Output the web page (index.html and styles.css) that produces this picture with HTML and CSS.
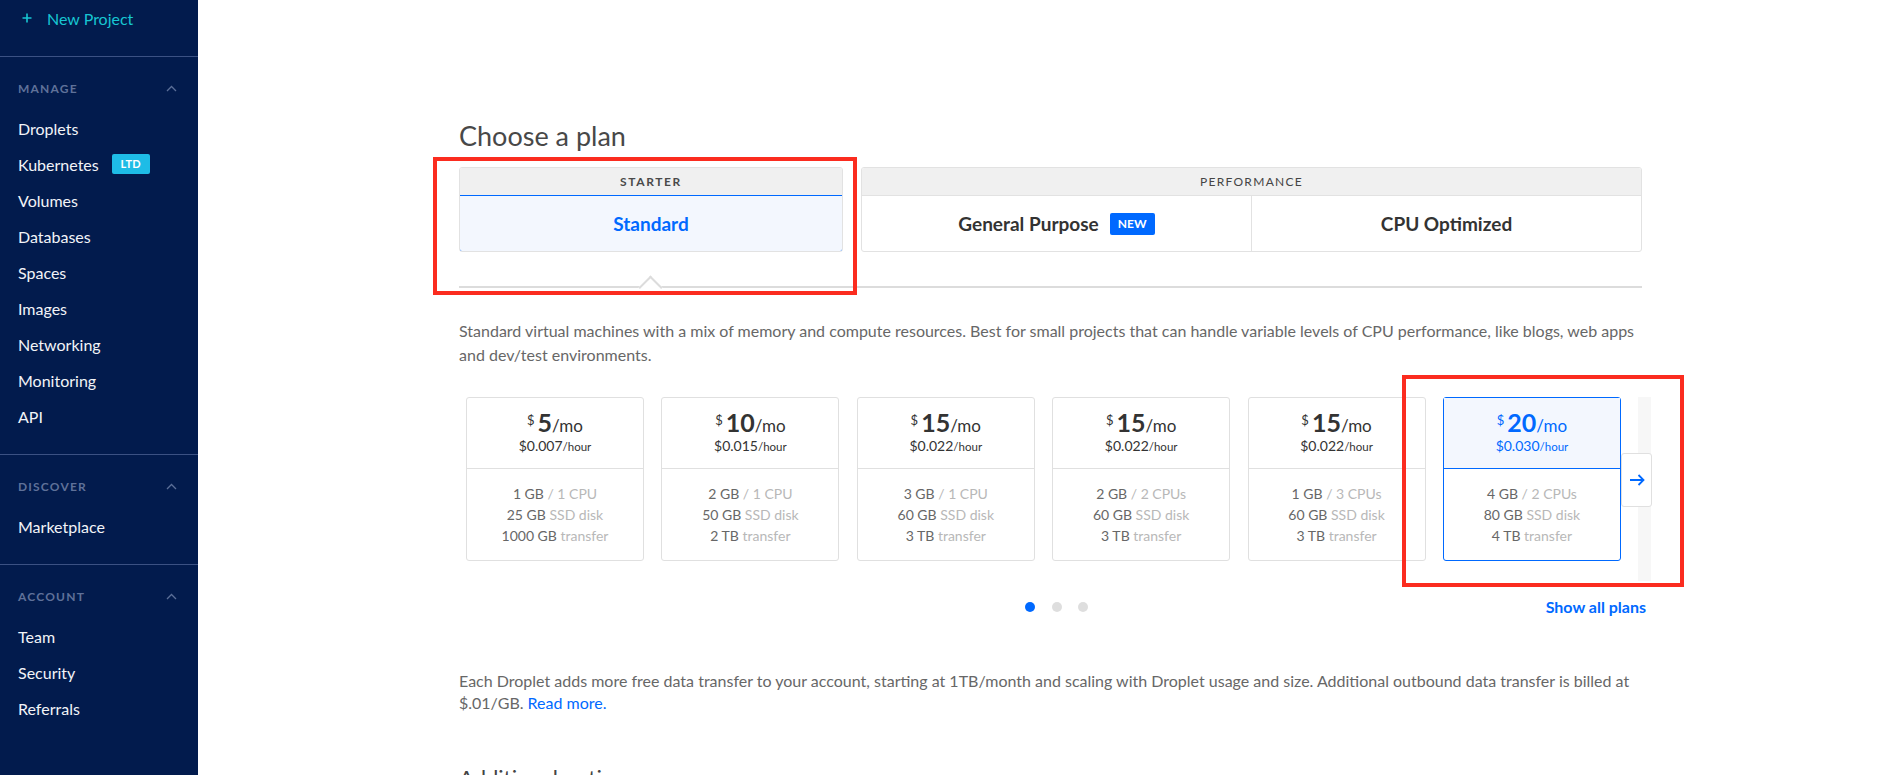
FILE: index.html
```html
<!DOCTYPE html>
<html lang="en">
<head>
<meta charset="utf-8">
<title>Choose a plan</title>
<link rel="stylesheet" href="styles.css">
</head>
<body>
<div class="app">
  <aside class="sidebar">
    <div class="new-project">
      <svg class="plus" width="10" height="10" viewBox="0 0 10 10"><path d="M5 0.5V9.5M0.5 5H9.5" stroke="#17c6d2" stroke-width="1.6" fill="none"/></svg>
      <span>New Project</span>
    </div>
    <div class="nav-section">
      <div class="nav-head"><span>MANAGE</span><svg width="11" height="7" viewBox="0 0 11 7"><path d="M1 6L5.5 1.5L10 6" stroke="#5b6f98" stroke-width="1.3" fill="none"/></svg></div>
      <a class="nav-item">Droplets</a>
      <a class="nav-item">Kubernetes <span class="ltd">LTD</span></a>
      <a class="nav-item">Volumes</a>
      <a class="nav-item">Databases</a>
      <a class="nav-item">Spaces</a>
      <a class="nav-item">Images</a>
      <a class="nav-item">Networking</a>
      <a class="nav-item">Monitoring</a>
      <a class="nav-item">API</a>
    </div>
    <div class="nav-section">
      <div class="nav-head"><span>DISCOVER</span><svg width="11" height="7" viewBox="0 0 11 7"><path d="M1 6L5.5 1.5L10 6" stroke="#5b6f98" stroke-width="1.3" fill="none"/></svg></div>
      <a class="nav-item">Marketplace</a>
    </div>
    <div class="nav-section">
      <div class="nav-head"><span>ACCOUNT</span><svg width="11" height="7" viewBox="0 0 11 7"><path d="M1 6L5.5 1.5L10 6" stroke="#5b6f98" stroke-width="1.3" fill="none"/></svg></div>
      <a class="nav-item">Team</a>
      <a class="nav-item">Security</a>
      <a class="nav-item">Referrals</a>
    </div>
  </aside>

  <main class="main">
    <div class="content">
      <h2 class="title">Choose a plan</h2>

      <div class="tabs">
        <div class="tab-group starter">
          <div class="tab-head">STARTER</div>
          <div class="tab-row">
            <div class="tab selected">Standard</div>
          </div>
        </div>
        <div class="tab-group performance">
          <div class="tab-head">PERFORMANCE</div>
          <div class="tab-row">
            <div class="tab">General Purpose <span class="new">NEW</span></div>
            <div class="tab">CPU Optimized</div>
          </div>
        </div>
      </div>
      <div class="plan-line"><span class="notch"></span></div>

      <p class="desc">Standard virtual machines with a mix of memory and compute resources. Best for small projects that can handle variable levels of CPU performance, like blogs, web apps and dev/test environments.</p>

      <div class="carousel">
        <div class="cards">
          <div class="card">
            <div class="card-top">
              <div class="price"><sup>$</sup><b>5</b>/mo</div>
              <div class="hourly">$0.007<small>/hour</small></div>
            </div>
            <div class="card-specs">
              <div>1 GB <i>/ 1 CPU</i></div>
              <div>25 GB <i>SSD disk</i></div>
              <div>1000 GB <i>transfer</i></div>
            </div>
          </div>
          <div class="card">
            <div class="card-top">
              <div class="price"><sup>$</sup><b>10</b>/mo</div>
              <div class="hourly">$0.015<small>/hour</small></div>
            </div>
            <div class="card-specs">
              <div>2 GB <i>/ 1 CPU</i></div>
              <div>50 GB <i>SSD disk</i></div>
              <div>2 TB <i>transfer</i></div>
            </div>
          </div>
          <div class="card">
            <div class="card-top">
              <div class="price"><sup>$</sup><b>15</b>/mo</div>
              <div class="hourly">$0.022<small>/hour</small></div>
            </div>
            <div class="card-specs">
              <div>3 GB <i>/ 1 CPU</i></div>
              <div>60 GB <i>SSD disk</i></div>
              <div>3 TB <i>transfer</i></div>
            </div>
          </div>
          <div class="card">
            <div class="card-top">
              <div class="price"><sup>$</sup><b>15</b>/mo</div>
              <div class="hourly">$0.022<small>/hour</small></div>
            </div>
            <div class="card-specs">
              <div>2 GB <i>/ 2 CPUs</i></div>
              <div>60 GB <i>SSD disk</i></div>
              <div>3 TB <i>transfer</i></div>
            </div>
          </div>
          <div class="card">
            <div class="card-top">
              <div class="price"><sup>$</sup><b>15</b>/mo</div>
              <div class="hourly">$0.022<small>/hour</small></div>
            </div>
            <div class="card-specs">
              <div>1 GB <i>/ 3 CPUs</i></div>
              <div>60 GB <i>SSD disk</i></div>
              <div>3 TB <i>transfer</i></div>
            </div>
          </div>
          <div class="card active">
            <div class="card-top">
              <div class="price"><sup>$</sup><b>20</b>/mo</div>
              <div class="hourly">$0.030<small>/hour</small></div>
            </div>
            <div class="card-specs">
              <div>4 GB <i>/ 2 CPUs</i></div>
              <div>80 GB <i>SSD disk</i></div>
              <div>4 TB <i>transfer</i></div>
            </div>
          </div>
        </div>
        <span class="fade-strip"></span>
        <button class="next" aria-label="Next">
          <svg width="16" height="12" viewBox="0 0 16 12"><path d="M1 6H14.5M9.5 1L14.5 6L9.5 11" stroke="#0069ff" stroke-width="1.8" fill="none"/></svg>
        </button>
      </div>

      <div class="pager">
        <div class="dots"><span class="dot on"></span><span class="dot"></span><span class="dot"></span></div>
        <a class="show-all">Show all plans</a>
      </div>

      <p class="note">Each Droplet adds more free data transfer to your account, starting at 1TB/month and scaling with Droplet usage and size. Additional outbound data transfer is billed at $.01/GB. <a class="link">Read more.</a></p>

      <h3 class="sub">Additional options</h3>
    </div>
  </main>
</div>
<div class="mark mark-1"></div>
<div class="mark mark-2"></div>
</body>
</html>
```

FILE: styles.css
```css
html, body {
  margin: 0;
  padding: 0;
  height: 775px;
  overflow: hidden;
  background: #fff;
  font-family: Lato, "Liberation Sans", sans-serif;
  color: #444;
}

.app {
  display: flex;
  height: 775px;
}

/* Sidebar */
.sidebar {
  width: 198px;
  flex: none;
  background: #021b4d;
  color: #fff;
}
.new-project {
  display: flex;
  align-items: center;
  height: 36px;
  padding: 0 0 20px 22px;
  color: #17c6d2;
  font-size: 16px;
  border-bottom: 1px solid #3b5183;
}
.new-project .plus { margin-right: 15px; }
.nav-section {
  padding: 21px 0 20px;
  border-bottom: 1px solid #3b5183;
}
.nav-section:last-child { border-bottom: none; }
.nav-head {
  display: flex;
  align-items: center;
  justify-content: space-between;
  height: 20px;
  padding: 0 21px 0 18px;
  margin-bottom: 12px;
  font-size: 12px;
  font-weight: 700;
  letter-spacing: 1.2px;
  color: #5f7199;
}
.nav-item {
  display: flex;
  align-items: center;
  height: 36px;
  padding-left: 18px;
  font-size: 16px;
  color: #f2f4f8;
}
.ltd {
  display: inline-block;
  margin-left: 13px;
  width: 38px;
  height: 20px;
  line-height: 20px;
  border-radius: 2px;
  background: #1ebce6;
  color: #fff;
  font-size: 11px;
  font-weight: 700;
  text-align: center;
  letter-spacing: 0.3px;
}

/* Main */
.main {
  flex: 1;
  min-width: 0;
}
.content {
  width: 1183px;
  margin: 0 auto;
  padding-top: 120px;
}
.title {
  margin: 0 0 15px;
  font-size: 27px;
  line-height: 32px;
  font-weight: 400;
  color: #484848;
}

/* Tabs */
.tabs {
  display: flex;
  gap: 18px;
}
.tab-group {
  border: 1px solid #e2e2e2;
  border-radius: 3px;
  overflow: hidden;
  display: flex;
  flex-direction: column;
}
.starter { width: 382px; flex: none; }
.performance { flex: 1; }
.tab-head {
  height: 27px;
  line-height: 27px;
  background: #f0f0f0;
  text-align: center;
  font-size: 12px;
  font-weight: 700;
  letter-spacing: 1.6px;
  color: #4a4a4a;
  border-bottom: 1px solid #e2e2e2;
}
.performance .tab-head { font-weight: 400; color: #444; letter-spacing: 1.3px; }
.tab-row {
  display: flex;
  height: 55px;
}
.tab {
  flex: 1;
  display: flex;
  align-items: center;
  justify-content: center;
  font-size: 19px;
  font-weight: 700;
  color: #333;
}
.tab + .tab { border-left: 1px solid #e2e2e2; }
.tab.selected {
  background: #f3f7fe;
  color: #0069ff;
  border: 1px solid #0069ff;
  border-radius: 0 0 3px 3px;
  margin: -1px -1px -1px;
}
.new {
  display: inline-block;
  margin-left: 11px;
  width: 45px;
  height: 22px;
  line-height: 22px;
  border-radius: 2px;
  background: #0069ff;
  color: #fff;
  font-size: 12px;
  font-weight: 700;
  text-align: center;
}

.plan-line {
  position: relative;
  height: 2px;
  background: #dcdcdc;
  margin-top: 34px;
}
.notch {
  position: absolute;
  left: 183px;
  top: -7px;
  width: 15px;
  height: 15px;
  background: #fff;
  border-top: 2px solid #dcdcdc;
  border-left: 2px solid #dcdcdc;
  transform: rotate(45deg);
}

.desc {
  margin: 31px 0 0;
  font-size: 16px;
  line-height: 24px;
  color: #676767;
}

/* Cards */
.carousel {
  position: relative;
  margin-top: 30px;
  padding: 0 7px;
}
.cards {
  display: flex;
  gap: 17.4px;
}
.card {
  width: 178px;
  height: 164px;
  flex: none;
  box-sizing: border-box;
  border: 1px solid #e0e0e0;
  border-radius: 3px;
  display: flex;
  flex-direction: column;
  text-align: center;
  background: #fff;
}
.card-top {
  height: 69px;
  border-bottom: 1px solid #e0e0e0;
  display: flex;
  flex-direction: column;
  justify-content: center;
  color: #333;
  padding-top: 1px;
}
.price {
  font-size: 17px;
  line-height: 23px;
}
.price sup {
  font-size: 13px;
  vertical-align: 7px;
  line-height: 0;
  margin-right: 3px;
}
.price b {
  font-size: 25px;
  font-weight: 700;
}
.hourly {
  font-size: 14px;
  line-height: 18px;
}
.hourly small { font-size: 11.5px; }
.card-specs {
  flex: 1;
  display: flex;
  flex-direction: column;
  justify-content: center;
  font-size: 14px;
  line-height: 21px;
  color: #676767;
}
.card-specs i {
  font-style: normal;
  color: #b8b8b8;
}
.card.active {
  border-color: #0069ff;
}
.card.active .card-top {
  background: #f3f7fe;
  color: #0069ff;
  border-bottom-color: #0069ff;
}

.fade-strip {
  position: absolute;
  left: 1179px;
  top: 0;
  width: 13px;
  height: 184px;
  background: #f7f7f7;
}
.next {
  position: absolute;
  left: 1162px;
  top: 56px;
  width: 31px;
  height: 54px;
  padding: 0;
  border: 1px solid #e0e0e0;
  border-radius: 3px;
  background: #fff;
  display: flex;
  align-items: center;
  justify-content: center;
}

.pager {
  position: relative;
  margin-top: 36px;
  height: 20px;
  display: flex;
  align-items: center;
  justify-content: center;
}
.dots {
  display: flex;
  gap: 16.5px;
  margin-left: 12px;
}
.dot {
  width: 10px;
  height: 10px;
  border-radius: 50%;
  background: #dedede;
}
.dot.on { background: #0069ff; }
.show-all {
  position: absolute;
  right: -4px;
  top: 0;
  line-height: 20px;
  font-size: 16px;
  font-weight: 700;
  color: #0069ff;
}

.note {
  margin: 53px 0 0;
  font-size: 16px;
  line-height: 22px;
  color: #676767;
}
.link { color: #0069ff; }

.sub {
  margin: 50px 0 0;
  font-size: 22px;
  font-weight: 400;
  color: #444;
}

/* Red annotation boxes */
.mark {
  position: absolute;
  border: 4px solid #fb2c1f;
  box-sizing: border-box;
}
.mark-1 {
  left: 433px;
  top: 157px;
  width: 424px;
  height: 138px;
}
.mark-2 {
  left: 1402px;
  top: 375px;
  width: 282px;
  height: 212px;
}
```
